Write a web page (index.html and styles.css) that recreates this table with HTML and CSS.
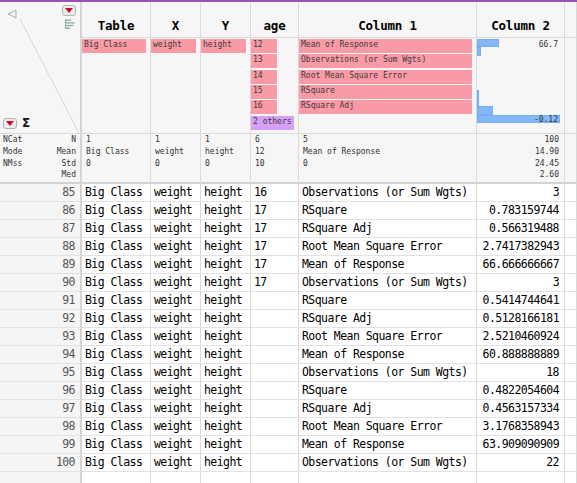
FILE: index.html
```html
<!DOCTYPE html>
<html>
<head>
<meta charset="utf-8">
<link rel="stylesheet" href="styles.css">
</head>
<body>
<div class="topbar"></div>
<div class="head">
  <div class="corner">
    <svg class="diag" width="80" height="131" viewBox="0 0 80 131"><line x1="20" y1="17" x2="79" y2="131" stroke="#d6d6d6" stroke-width="1"/></svg>
    <div class="corner-top">
      <svg class="tri" width="10" height="10" viewBox="0 0 10 10"><polygon points="9,1 9,9 1.5,5" fill="none" stroke="#a8a8a8" stroke-width="1"/></svg>
      <div class="corner-tools">
        <span class="dd"><svg width="8" height="5" viewBox="0 0 8 5"><polygon points="0,0 8,0 4,5" fill="#c8102e"/></svg></span>
        <svg class="barsicon" width="12" height="12" viewBox="0 0 12 12">
          <rect x="1" y="1" width="1.2" height="10" fill="#8fa6c9"/>
          <rect x="2.2" y="1.5" width="5" height="1.3" fill="#8fa89a"/>
          <rect x="2.2" y="4.2" width="8.5" height="1.3" fill="#8fa89a"/>
          <rect x="2.2" y="6.9" width="7" height="1.3" fill="#8fa89a"/>
          <rect x="2.2" y="9.6" width="4" height="1.3" fill="#8fa89a"/>
        </svg>
      </div>
    </div>
    <div class="corner-bottom">
      <span class="dd"><svg width="8" height="5" viewBox="0 0 8 5"><polygon points="0,0 8,0 4,5" fill="#c8102e"/></svg></span>
      <span class="sigma">Σ</span>
    </div>
  </div>
  <div class="title">Table</div>
  <div class="title">X</div>
  <div class="title">Y</div>
  <div class="title">age</div>
  <div class="title">Column 1</div>
  <div class="title">Column 2</div>
  <div class="title empty"></div>

  <div class="chart"><div class="bar pink w64">Big Class</div></div>
  <div class="chart"><div class="bar pink w45">weight</div></div>
  <div class="chart"><div class="bar pink w45">height</div></div>
  <div class="chart">
    <div class="bar pink w26">12</div>
    <div class="bar pink w26">13</div>
    <div class="bar pink w26">14</div>
    <div class="bar pink w26">15</div>
    <div class="bar pink w26">16</div>
    <div class="bar purple w43">2 others</div>
  </div>
  <div class="chart">
    <div class="bar pink w173">Mean of Response</div>
    <div class="bar pink w173">Observations (or Sum Wgts)</div>
    <div class="bar pink w173">Root Mean Square Error</div>
    <div class="bar pink w173">RSquare</div>
    <div class="bar pink w173">RSquare Adj</div>
  </div>
  <div class="chart hist">
    <div class="hbar" style="width:22px"></div>
    <div class="hbar" style="width:4px"></div>
    <div class="hbar" style="width:0"></div>
    <div class="hbar" style="width:0"></div>
    <div class="hbar" style="width:0"></div>
    <div class="hbar" style="width:0"></div>
    <div class="hbar" style="width:2px"></div>
    <div class="hbar" style="width:2px"></div>
    <div class="hbar" style="width:16px"></div>
    <div class="hbar" style="width:83px"></div>
    <span class="hlabel hmax">66.7</span>
    <span class="hlabel hmin">-0.12</span>
  </div>
  <div class="chart empty"></div>

  <div class="sum sum-labels">
    <div class="lcol"><div>NCat</div><div>Mode</div><div>NMss</div></div>
    <div class="rcol"><div>N</div><div>Mean</div><div>Std</div><div>Med</div></div>
  </div>
  <div class="sum"><div>1</div><div>Big Class</div><div>0</div></div>
  <div class="sum"><div>1</div><div>weight</div><div>0</div></div>
  <div class="sum"><div>1</div><div>height</div><div>0</div></div>
  <div class="sum"><div>6</div><div>12</div><div>10</div></div>
  <div class="sum"><div>5</div><div>Mean of Response</div><div>0</div></div>
  <div class="sum num"><div>100</div><div>14.90</div><div>24.45</div><div>2.60</div></div>
  <div class="sum empty"></div>
</div>

<div class="rows">
  <div class="row"><div class="rn">85</div><div>Big Class</div><div>weight</div><div>height</div><div>16</div><div>Observations (or Sum Wgts)</div><div class="num">3</div><div></div></div>
  <div class="row"><div class="rn">86</div><div>Big Class</div><div>weight</div><div>height</div><div>17</div><div>RSquare</div><div class="num">0.783159744</div><div></div></div>
  <div class="row"><div class="rn">87</div><div>Big Class</div><div>weight</div><div>height</div><div>17</div><div>RSquare Adj</div><div class="num">0.566319488</div><div></div></div>
  <div class="row"><div class="rn">88</div><div>Big Class</div><div>weight</div><div>height</div><div>17</div><div>Root Mean Square Error</div><div class="num">2.7417382943</div><div></div></div>
  <div class="row"><div class="rn">89</div><div>Big Class</div><div>weight</div><div>height</div><div>17</div><div>Mean of Response</div><div class="num">66.666666667</div><div></div></div>
  <div class="row"><div class="rn">90</div><div>Big Class</div><div>weight</div><div>height</div><div>17</div><div>Observations (or Sum Wgts)</div><div class="num">3</div><div></div></div>
  <div class="row"><div class="rn">91</div><div>Big Class</div><div>weight</div><div>height</div><div></div><div>RSquare</div><div class="num">0.5414744641</div><div></div></div>
  <div class="row"><div class="rn">92</div><div>Big Class</div><div>weight</div><div>height</div><div></div><div>RSquare Adj</div><div class="num">0.5128166181</div><div></div></div>
  <div class="row"><div class="rn">93</div><div>Big Class</div><div>weight</div><div>height</div><div></div><div>Root Mean Square Error</div><div class="num">2.5210460924</div><div></div></div>
  <div class="row"><div class="rn">94</div><div>Big Class</div><div>weight</div><div>height</div><div></div><div>Mean of Response</div><div class="num">60.888888889</div><div></div></div>
  <div class="row"><div class="rn">95</div><div>Big Class</div><div>weight</div><div>height</div><div></div><div>Observations (or Sum Wgts)</div><div class="num">18</div><div></div></div>
  <div class="row"><div class="rn">96</div><div>Big Class</div><div>weight</div><div>height</div><div></div><div>RSquare</div><div class="num">0.4822054604</div><div></div></div>
  <div class="row"><div class="rn">97</div><div>Big Class</div><div>weight</div><div>height</div><div></div><div>RSquare Adj</div><div class="num">0.4563157334</div><div></div></div>
  <div class="row"><div class="rn">98</div><div>Big Class</div><div>weight</div><div>height</div><div></div><div>Root Mean Square Error</div><div class="num">3.1768358943</div><div></div></div>
  <div class="row"><div class="rn">99</div><div>Big Class</div><div>weight</div><div>height</div><div></div><div>Mean of Response</div><div class="num">63.909090909</div><div></div></div>
  <div class="row"><div class="rn">100</div><div>Big Class</div><div>weight</div><div>height</div><div></div><div>Observations (or Sum Wgts)</div><div class="num">22</div><div></div></div>
  <div class="row"><div class="rn"></div><div></div><div></div><div></div><div></div><div></div><div></div><div></div></div>
</div>
</body>
</html>
```

FILE: styles.css
```css
* { box-sizing: border-box; }
html, body { margin: 0; padding: 0; }
body {
  width: 577px;
  height: 483px;
  overflow: hidden;
  background: #ffffff;
  font-family: "DejaVu Sans Mono", "Liberation Mono", monospace;
  color: #000;
}
.topbar { height: 2px; background: #9d50ad; }

.head {
  display: grid;
  grid-template-columns: 82px 69px 50px 50px 48px 178px 88px 1fr;
  grid-template-rows: 36px 96px 50px;
  background: #f6f6f6;
}
.head > div { border-right: 1px solid #dadada; }

.corner {
  grid-row: 1 / span 2;
  position: relative;
  border-right: 2px solid #d4d4d4 !important;
  border-bottom: 1px solid #dadada;
  display: flex;
  flex-direction: column;
  justify-content: space-between;
  padding: 3px 4px 3px 3px;
}
.diag { position: absolute; left: 0; top: 0; }
.corner-top { display: flex; justify-content: space-between; align-items: flex-start; position: relative; }
.tri { margin: 4px 0 0 4px; }
.corner-tools { display: flex; flex-direction: column; align-items: flex-end; gap: 2px; }
.dd {
  display: flex;
  align-items: center;
  justify-content: center;
  width: 14px;
  height: 11px;
  background: #ececec;
  border: 1px solid #b4b4b4;
  border-radius: 3px;
}
.barsicon { margin-right: 0; }
.corner-bottom { display: flex; align-items: center; gap: 5px; position: relative; margin-bottom: 1px; }
.sigma { font-family: "DejaVu Sans", sans-serif; font-weight: bold; font-size: 12px; line-height: 11px; color: #111; }

.title {
  border-bottom: 1px solid #dadada;
  display: flex;
  align-items: flex-end;
  justify-content: center;
  font-weight: bold;
  font-size: 12.5px;
  line-height: 15px;
  padding-bottom: 4px;
  letter-spacing: -0.2px;
}

.chart {
  border-bottom: 1px solid #dadada;
  padding: 1px 0 0 0;
  display: flex;
  flex-direction: column;
  gap: 1.35px;
}
.bar {
  height: 14px;
  font-size: 8px;
  line-height: 12px;
  padding-left: 2px;
  color: #3a3a3a;
  white-space: nowrap;
  overflow: hidden;
}
.pink { background: #fb9aa7; }
.purple { background: #d6a0f6; }
.w64 { width: 64px; }
.w45 { width: 45px; }
.w26 { width: 26px; }
.w43 { width: 43px; }
.w173 { width: 173px; }

.hist { position: relative; gap: 0; }
.hbar {
  height: 8.43px;
  background: #84b8f7;
  box-shadow: inset 0 0 0 0.5px #6ba4ee;
}
.hlabel {
  position: absolute;
  right: 6px;
  font-size: 8px;
  line-height: 10px;
  color: #333;
}
.hmax { top: 2px; }
.hmin { top: 77px; }

.sum {
  border-bottom: 2px solid #d4d4d4;
  font-size: 8px;
  line-height: 11.8px;
  padding: 0 0 0 4px;
  color: #333;
  white-space: nowrap;
  overflow: hidden;
}
.sum.num { text-align: right; padding: 0 5px 0 0; }
.sum-labels {
  display: flex;
  justify-content: space-between;
  padding: 0 4px 0 3px;
  border-right: 2px solid #d4d4d4 !important;
}
.rcol { text-align: right; }

.row {
  display: grid;
  grid-template-columns: 82px 69px 50px 50px 48px 178px 88px 1fr;
  height: 18px;
  font-size: 11.5px;
  letter-spacing: -0.55px;
  line-height: 17px;
}
.row > div {
  border-right: 1px solid #dadada;
  border-bottom: 1px solid #e2e2e2;
  padding-left: 3px;
  white-space: nowrap;
  overflow: hidden;
}
.row > .rn {
  background: #f5f5f5;
  color: #555;
  text-align: right;
  padding: 0 5px 0 0;
  border-right: 2px solid #d4d4d4;
}
.row > .num { text-align: right; padding: 0 5px 0 0; }
```
